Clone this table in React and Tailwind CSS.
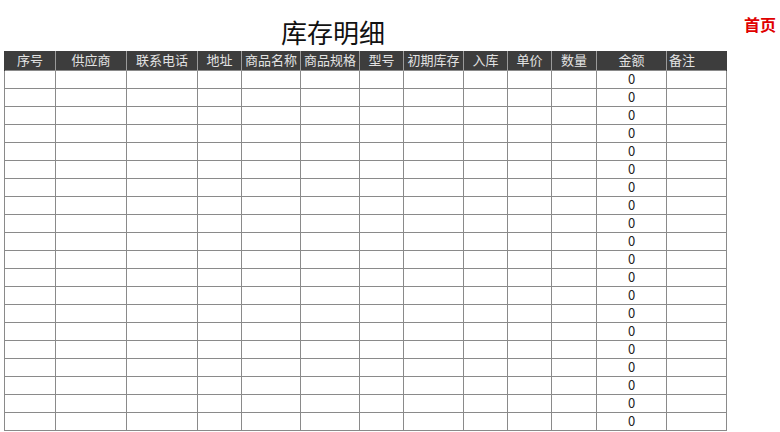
import React from "react";

const cols = [
  { name: "序号", w: 51 },
  { name: "供应商", w: 71 },
  { name: "联系电话", w: 71 },
  { name: "地址", w: 44 },
  { name: "商品名称", w: 59 },
  { name: "商品规格", w: 59 },
  { name: "型号", w: 44 },
  { name: "初期库存", w: 60 },
  { name: "入库", w: 44 },
  { name: "单价", w: 44 },
  { name: "数量", w: 45 },
  { name: "金额", w: 70 },
  { name: "备注", w: 60, left: true },
];

const rows = Array.from({ length: 20 }, (_, i) => i);

export default function App() {
  return (
    <div
      className="w-[780px] h-[432px] bg-white overflow-hidden"
      style={{ fontFamily: '"Noto Sans CJK SC", "Noto Sans", sans-serif' }}
    >
      <div className="flex items-start h-[51px]">
        <div className="ml-[281px] mt-[17px] text-[26px] leading-[30px] text-[#111]">库存明细</div>
        <div className="ml-auto mr-[4px] mt-[13px] text-[16px] leading-[22px] font-bold text-[#e00000]">首页</div>
      </div>
      <table className="ml-[4px] table-fixed border-collapse w-[722px]">
        <colgroup>
          {cols.map((c) => (
            <col key={c.name} style={{ width: c.w }} />
          ))}
        </colgroup>
        <thead>
          <tr className="bg-[#3d3d3d]">
            {cols.map((c) => (
              <th
                key={c.name}
                className={`h-[19px] p-0 font-normal text-[13px] leading-[18px] text-[#e2e2e2] border-x border-[#9a9a9a] first:border-l-[#3d3d3d] last:border-r-[#3d3d3d] ${c.left ? "text-left pl-[2px]" : "text-center"}`}
              >
                {c.name}
              </th>
            ))}
          </tr>
        </thead>
        <tbody>
          {rows.map((r) => (
            <tr key={r}>
              {cols.map((c, i) => (
                <td
                  key={c.name}
                  className="h-[18px] p-0 border border-[#8a8a8a] text-center text-[13px] leading-[16px] text-[#222]"
                >
                  {i === 11 ? "0" : ""}
                </td>
              ))}
            </tr>
          ))}
        </tbody>
      </table>
    </div>
  );
}
